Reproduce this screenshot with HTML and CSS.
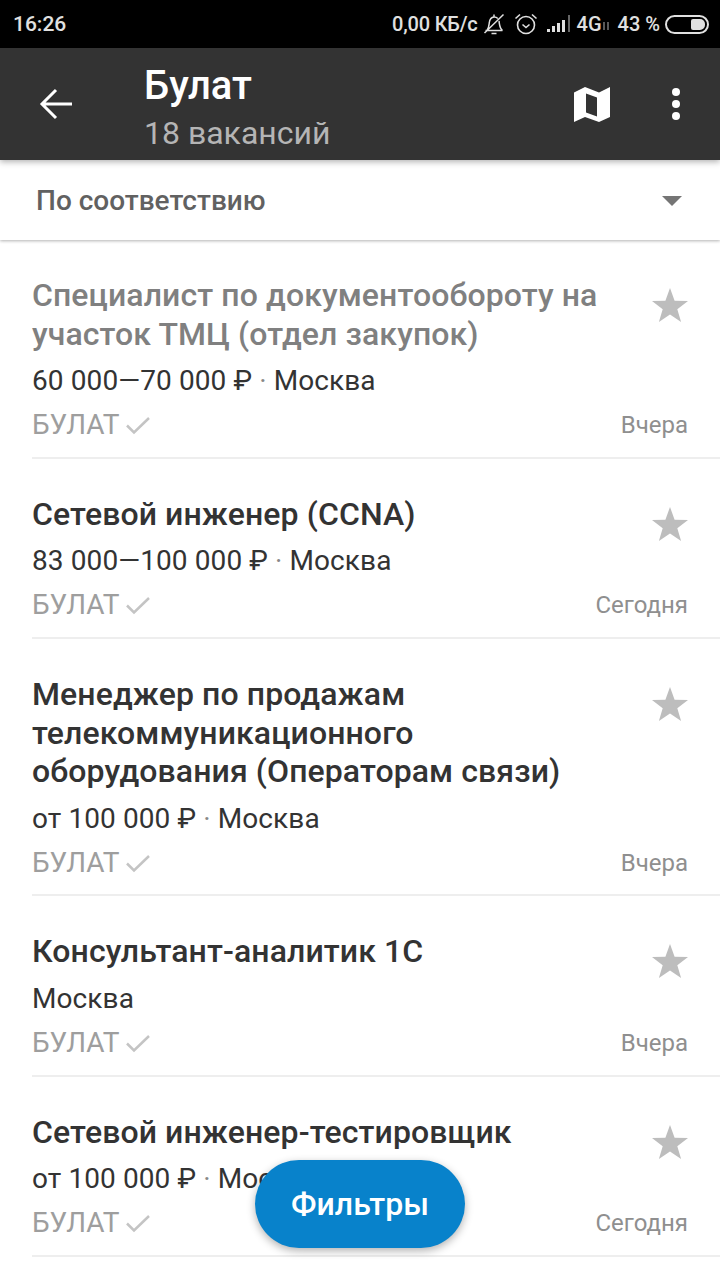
FILE: index.html
```html
<!DOCTYPE html>
<html lang="ru">
<head>
<meta charset="utf-8">
<title>Булат — вакансии</title>
<link rel="stylesheet" href="styles.css">
</head>
<body>
<div class="screen">
  <div class="statusbar">
    <span class="clock">16:26</span>
    <div class="status-right">
      <span class="speed">0,00 КБ/с</span>
      <svg class="si-bell" viewBox="0 0 22 24" width="22" height="24"><path d="M2.500 18.500h17M4 18.500c2-2.500 2-5.500 2.300-8C6.700 7.300 8.500 5.300 11 5c1.500-.1 2.800.5 3.800 1.500M16 9c.6 3.500.3 6.800 3.500 9.500M11 2.500V5M8.500 21.500h5M1.500 21L20.500 2.500" fill="none" stroke="#e0e0e0" stroke-width="1.500"/></svg>
      <svg class="si-alarm" viewBox="0 0 24 24" width="24" height="24"><circle cx="12" cy="13" r="8.500" fill="none" stroke="#e0e0e0" stroke-width="1.600"/><path d="M8.500 12.500l3.500 3 3.500-3M1.500 6.500L6 2.500M22.500 6.500L18 2.500" fill="none" stroke="#e0e0e0" stroke-width="1.600"/></svg>
      <svg class="si-signal" viewBox="0 0 26 20" width="26" height="20"><path fill="#e0e0e0" d="M1 15h3v3H1zM6 12h3v6H6zM11 9h3v9h-3zM16 6h3v12h-3z"/><path fill="#666" d="M22 1h2v17h-2z"/></svg>
      <span class="net">4G</span>
      <svg class="si-arrows" viewBox="0 0 8 10" width="8" height="10"><path d="M2 1v8M6 1v8" stroke="#777" stroke-width="1.500"/></svg>
      <span class="pct">43 %</span>
      <span class="battery"><span class="battery-fill"></span></span>
    </div>
  </div>

  <header class="toolbar">
    <svg class="back" viewBox="0 0 34 32" width="34" height="32"><path d="M33 16H3M17 2L3 16l14 14" fill="none" stroke="#fff" stroke-width="3"/></svg>
    <div class="toolbar-title">
      <div class="title">Булат</div>
      <div class="subtitle">18 вакансий</div>
    </div>
    <svg class="map" viewBox="0 0 38 38" width="38" height="38"><path fill="#fff" fill-rule="evenodd" d="M1 7.500L12 2l14 5.500L37 2v30l-11 5-14-5-11 5zM13 8.500v19l11 4v-19z"/></svg>
    <div class="dots"><i></i><i></i><i></i></div>
  </header>

  <div class="sortbar">
    <span class="sort-label">По соответствию</span>
    <span class="caret"></span>
  </div>

  <main class="list">
    <article class="item">
      <div class="main">
        <h2 class="job viewed">Специалист по документообороту на участок ТМЦ (отдел закупок)</h2>
        <p class="meta">60 000—70 000 ₽<span class="sep"> · </span>Москва</p>
        <p class="company">БУЛАТ <svg class="check" viewBox="0 0 24 20" width="24" height="20"><path d="M1 10.500l7 7L23 3" fill="none" stroke="#c4c4c4" stroke-width="2.500"/></svg></p>
      </div>
      <div class="side">
        <svg class="star" viewBox="0 0 36 34" width="36" height="34"><path fill="#bdbdbd" d="M18 0l4.600 12.700L36 13l-10.700 8.200L29.100 34 18 26.500 6.900 34l3.800-12.800L0 13l13.400-.3z"/></svg>
        <span class="when">Вчера</span>
      </div>
    </article>
    <article class="item">
      <div class="main">
        <h2 class="job">Сетевой инженер (CCNA)</h2>
        <p class="meta">83 000—100 000 ₽<span class="sep"> · </span>Москва</p>
        <p class="company">БУЛАТ <svg class="check" viewBox="0 0 24 20" width="24" height="20"><path d="M1 10.500l7 7L23 3" fill="none" stroke="#c4c4c4" stroke-width="2.500"/></svg></p>
      </div>
      <div class="side">
        <svg class="star" viewBox="0 0 36 34" width="36" height="34"><path fill="#bdbdbd" d="M18 0l4.600 12.700L36 13l-10.700 8.200L29.100 34 18 26.500 6.900 34l3.800-12.800L0 13l13.400-.3z"/></svg>
        <span class="when">Сегодня</span>
      </div>
    </article>
    <article class="item">
      <div class="main">
        <h2 class="job">Менеджер по продажам телекоммуникационного оборудования (Операторам связи)</h2>
        <p class="meta">от 100 000 ₽<span class="sep"> · </span>Москва</p>
        <p class="company">БУЛАТ <svg class="check" viewBox="0 0 24 20" width="24" height="20"><path d="M1 10.500l7 7L23 3" fill="none" stroke="#c4c4c4" stroke-width="2.500"/></svg></p>
      </div>
      <div class="side">
        <svg class="star" viewBox="0 0 36 34" width="36" height="34"><path fill="#bdbdbd" d="M18 0l4.600 12.700L36 13l-10.700 8.200L29.100 34 18 26.500 6.900 34l3.800-12.800L0 13l13.400-.3z"/></svg>
        <span class="when">Вчера</span>
      </div>
    </article>
    <article class="item">
      <div class="main">
        <h2 class="job">Консультант-аналитик 1С</h2>
        <p class="meta">Москва</p>
        <p class="company">БУЛАТ <svg class="check" viewBox="0 0 24 20" width="24" height="20"><path d="M1 10.500l7 7L23 3" fill="none" stroke="#c4c4c4" stroke-width="2.500"/></svg></p>
      </div>
      <div class="side">
        <svg class="star" viewBox="0 0 36 34" width="36" height="34"><path fill="#bdbdbd" d="M18 0l4.600 12.700L36 13l-10.700 8.200L29.100 34 18 26.500 6.900 34l3.800-12.800L0 13l13.400-.3z"/></svg>
        <span class="when">Вчера</span>
      </div>
    </article>
    <article class="item">
      <div class="main">
        <h2 class="job">Сетевой инженер-тестировщик</h2>
        <p class="meta">от 100 000 ₽<span class="sep"> · </span>Москва</p>
        <p class="company">БУЛАТ <svg class="check" viewBox="0 0 24 20" width="24" height="20"><path d="M1 10.500l7 7L23 3" fill="none" stroke="#c4c4c4" stroke-width="2.500"/></svg></p>
      </div>
      <div class="side">
        <svg class="star" viewBox="0 0 36 34" width="36" height="34"><path fill="#bdbdbd" d="M18 0l4.600 12.700L36 13l-10.700 8.200L29.100 34 18 26.500 6.900 34l3.800-12.800L0 13l13.400-.3z"/></svg>
        <span class="when">Сегодня</span>
      </div>
    </article>
  </main>

  <button class="fab">Фильтры</button>
</div>
</body>
</html>
```

FILE: styles.css
```css
* { box-sizing: border-box; }
html, body { margin: 0; padding: 0; background: #fff; }
.screen {
  position: relative;
  width: 720px;
  height: 1280px;
  overflow: hidden;
  font-family: Roboto, "Noto Sans", sans-serif;
  background: #fff;
}
.statusbar {
  height: 48px;
  background: #000;
  color: #e0e0e0;
  display: flex;
  align-items: center;
  justify-content: space-between;
  padding: 0 11px 0 13px;
  font-size: 20px;
  font-weight: 500;
}
.clock { font-size: 21px; }
.status-right { display: flex; align-items: center; }
.speed { margin-right: 5px; letter-spacing: -.2px; }
.si-bell { margin-right: 9px; }
.si-alarm { margin-right: 8px; }
.si-signal { margin-right: 5px; }
.si-arrows { margin: 4px 8px 0 0; }
.pct { margin-right: 5px; }
.battery {
  display: flex;
  justify-content: flex-end;
  align-items: center;
  width: 44px;
  height: 19px;
  border: 2px solid #e0e0e0;
  border-radius: 10px;
  padding: 0 2px;
}
.battery-fill { width: 14px; height: 11px; background: #e0e0e0; border-radius: 2px 5px 5px 2px; }

.toolbar {
  position: relative;
  z-index: 2;
  height: 112px;
  background: #333;
  display: flex;
  align-items: center;
  padding-left: 39px;
  box-shadow: 0 2px 6px rgba(0,0,0,.3);
}
.back { margin-right: 71px; flex: none; }
.toolbar-title { flex: 1; padding-top: 12px; }
.title { color: #fff; font-size: 40px; font-weight: 500; line-height: 46px; }
.subtitle { color: #b5b5b5; font-size: 32px; line-height: 48px; }
.map { margin-right: 61px; flex: none; }
.dots { display: flex; flex-direction: column; gap: 4px; margin-right: 40px; }
.dots i { display: block; width: 8px; height: 8px; border-radius: 50%; background: #fff; }

.sortbar {
  position: relative;
  z-index: 1;
  height: 80px;
  background: #fff;
  display: flex;
  align-items: center;
  justify-content: space-between;
  padding: 1px 38px 0 36px;
  box-shadow: 0 1px 3px rgba(0,0,0,.3);
}
.sort-label { color: #616161; font-size: 28px; font-weight: 500; }
.caret {
  width: 0; height: 0;
  border-left: 10px solid transparent;
  border-right: 10px solid transparent;
  border-top: 10px solid #757575;
}

.list { display: flex; flex-direction: column; }
.item {
  display: flex;
  justify-content: space-between;
  margin-left: 32px;
  padding: 36px 32px 10.800px 0;
  border-bottom: 2px solid #eee;
}
.main { width: 580px; }
.job {
  margin: 0 0 5px;
  color: #333;
  font-size: 32px;
  font-weight: 500;
  line-height: 38.500px;
  letter-spacing: .1px;
}
.job.viewed { color: #808080; }
.meta { margin: 0; color: #333; font-size: 28px; line-height: 46px; letter-spacing: .1px; }
.sep { color: #888; }
.company {
  margin: 0;
  color: #9e9e9e;
  font-size: 28px;
  line-height: 42px;
  display: flex;
  align-items: center;
  gap: 6px;
}
.side {
  display: flex;
  flex-direction: column;
  align-items: flex-end;
  justify-content: space-between;
}
.star { margin: 12px 0 0; }
.when { color: #8f8f8f; font-size: 24px; line-height: 42px; }

.fab {
  position: absolute;
  left: 255px;
  top: 1160px;
  width: 210px;
  height: 88px;
  border: 0;
  border-radius: 44px;
  background: #0882cb;
  color: #fff;
  font-family: Roboto, "Noto Sans", sans-serif;
  font-size: 32px;
  font-weight: 500;
  box-shadow: 0 3px 8px rgba(0,0,0,.3);
}
```
